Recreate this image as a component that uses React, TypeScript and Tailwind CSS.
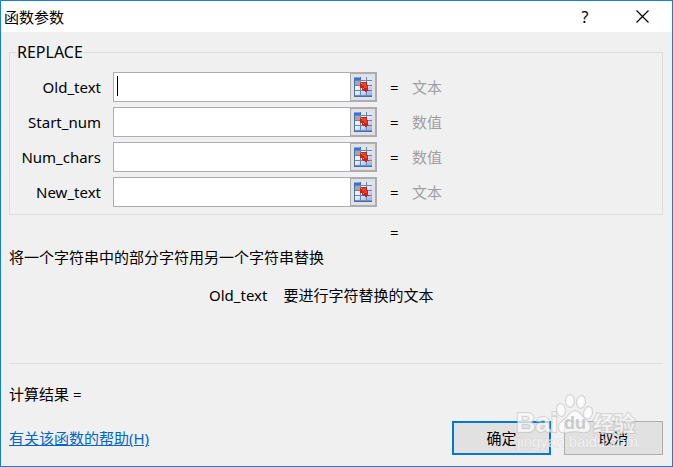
import React from "react";

const args = [
  { name: "Old_text", kind: "文本" },
  { name: "Start_num", kind: "数值" },
  { name: "Num_chars", kind: "数值" },
  { name: "New_text", kind: "文本" },
];

function RangeIcon() {
  return (
    <svg width="18" height="20" viewBox="0 0 18 20" shapeRendering="crispEdges" aria-hidden="true">
      <defs>
        <linearGradient id="cells" gradientUnits="userSpaceOnUse" x1="2" y1="3" x2="18" y2="20">
          <stop offset="0" stopColor="#ffffff" />
          <stop offset="0.4" stopColor="#e8effb" />
          <stop offset="1" stopColor="#86a8ea" />
        </linearGradient>
      </defs>
      <rect width="18" height="20" fill="#6686b8" />
      <path d="M0 0h7v3H0z" fill="#3f6fd6" />
      <path d="M0 0h6v1H0z" fill="#7ba2ee" />
      <path d="M7 0h5v3H7zM13 0h5v3h-5z" fill="#dde6f4" />
      <path d="M1 4h5v4H1z" fill="#a6a6a6" />
      <path d="M7 4h5v4H7zM13 4h5v4h-5zM1 9h5v4H1zM7 9h5v4H7zM13 9h5v4h-5zM1 14h5v4H1zM7 14h5v4H7zM13 14h5v4h-5z" fill="url(#cells)" />
      <path d="M0 3h1v16H0zM0 19h18v1H0z" fill="#4a6cab" />
      <path d="M1 18h17v1H1z" fill="#6d8fd0" />
      <path d="M7 5h6v3h1v5h1v1h-2v1h-2v-1H9v-1H8v-2H6V6h1z" fill="#cb240d" />
      <path d="M8 6h4v3h1v2h-3V9H8z" fill="#ee432a" />
      <path d="M7 6h1v1H7zM9 11h1v1H9z" fill="#f79a86" />
    </svg>
  );
}

function Watermark() {
  return (
    <svg
      className="pointer-events-none absolute right-[26px] bottom-0 font-['Liberation_Sans','Noto_Sans_CJK_SC',sans-serif]"
      width="124"
      height="62"
      viewBox="0 0 124 62"
      aria-hidden="true"
    >
      <g
        fill="#ffffff"
        fillOpacity="0.7"
        stroke="#bdbdbd"
        strokeOpacity="0.55"
        strokeWidth="2"
        paintOrder="stroke"
        fontWeight="700"
      >
        <text x="3" y="39" fontSize="27">Bai</text>
        <text x="80" y="38" fontSize="21">经验</text>
        <ellipse cx="48" cy="17" rx="4" ry="6" transform="rotate(-10 48 17)" />
        <ellipse cx="57" cy="8" rx="4" ry="6" />
        <ellipse cx="68" cy="9" rx="4" ry="6" transform="rotate(8 68 9)" />
        <ellipse cx="75" cy="20" rx="4" ry="6" transform="rotate(15 75 20)" />
        <path d="M62 18c-5 0-6 5-10 8c-5 4-7 6-6 10c1 4 5 4 9 3c4-1 9-1 13 0c5 1 9 0 9-5c0-5-4-7-7-10c-3-3-4-6-8-6z" />
      </g>
      <text x="51" y="36" fontSize="18" fontWeight="700" fill="#cacaca">du</text>
      <text x="4" y="54" fontSize="15" fill="#ffffff" fillOpacity="0.7" stroke="#c4c4c4" strokeOpacity="0.4" paintOrder="stroke">
        jingyan.baidu.com
      </text>
    </svg>
  );
}

export default function App() {
  return (
    <div className="flex min-h-screen flex-col border border-[#1a80d5] bg-[#f0f0f0] font-['Noto_Sans','Noto_Sans_CJK_SC',sans-serif] text-[15px] leading-5 text-black">
      <header className="flex h-[31px] shrink-0 items-center justify-between bg-white pl-[3px]">
        <h1>函数参数</h1>
        <div className="flex h-full">
          <button type="button" aria-label="帮助" className="w-[54px] text-base">?</button>
          <button type="button" aria-label="关闭" className="flex w-[60px] items-center justify-center">
            <svg width="13" height="13" viewBox="0 0 13 13" stroke="#000" strokeWidth="1.2" aria-hidden="true">
              <path d="M.5 .5l12 12M12.5 .5l-12 12" />
            </svg>
          </button>
        </div>
      </header>

      <main className="flex flex-1 flex-col pt-[10px] pr-[9px] pb-[11px] pl-2">
        <fieldset className="border border-[#dcdcdc] pb-[7px]">
          <legend className="ml-[6px] px-px text-base leading-5">REPLACE</legend>
          <div className="flex flex-col gap-[5px] pt-[10px]">
            {args.map((arg, i) => (
              <div key={arg.name} className="flex items-center">
                <label htmlFor={arg.name} className="w-[91px] text-right">{arg.name}</label>
                <div className="relative ml-3 flex h-[30px] min-w-0 flex-1 border border-[#abadb3] bg-white">
                  <input id={arg.name} type="text" className="min-w-0 flex-1 px-1 outline-none" />
                  {i === 0 && <span className="absolute top-[3px] left-[3px] h-5 w-px bg-black" />}
                  <button
                    type="button"
                    aria-label={`选择 ${arg.name}`}
                    className="flex w-[26px] items-center justify-center border border-[#abadb3] bg-[#e1e1e1]"
                  >
                    <RangeIcon />
                  </button>
                </div>
                <div className="flex w-[285px] pl-[13px]">
                  <span className="w-[22px]">=</span>
                  <span className="text-[#a0a0a0]">{arg.kind}</span>
                </div>
              </div>
            ))}
          </div>
        </fieldset>

        <div className="mt-[7px] flex justify-end">
          <span className="w-[273px]">=</span>
        </div>
        <p className="mt-[5px]">将一个字符串中的部分字符用另一个字符串替换</p>
        <div className="mt-[18px] flex gap-4 pl-[200px]">
          <span>Old_text</span>
          <span>要进行字符替换的文本</span>
        </div>
        <hr className="mt-auto border-[#dcdcdc]" />
        <p className="mt-5">计算结果 =</p>
        <div className="relative mt-[17px] flex items-center">
          <a href="#help" className="text-[#0066cc] underline">有关该函数的帮助(H)</a>
          <div className="ml-auto flex gap-[13px]">
            <button type="button" className="h-[34px] w-[99px] border-2 border-[#0078d7] bg-[#e1e1e1]">确定</button>
            <button type="button" className="h-[34px] w-[99px] border border-[#adadad] bg-[#e1e1e1]">取消</button>
          </div>
          <Watermark />
        </div>
      </main>
    </div>
  );
}
